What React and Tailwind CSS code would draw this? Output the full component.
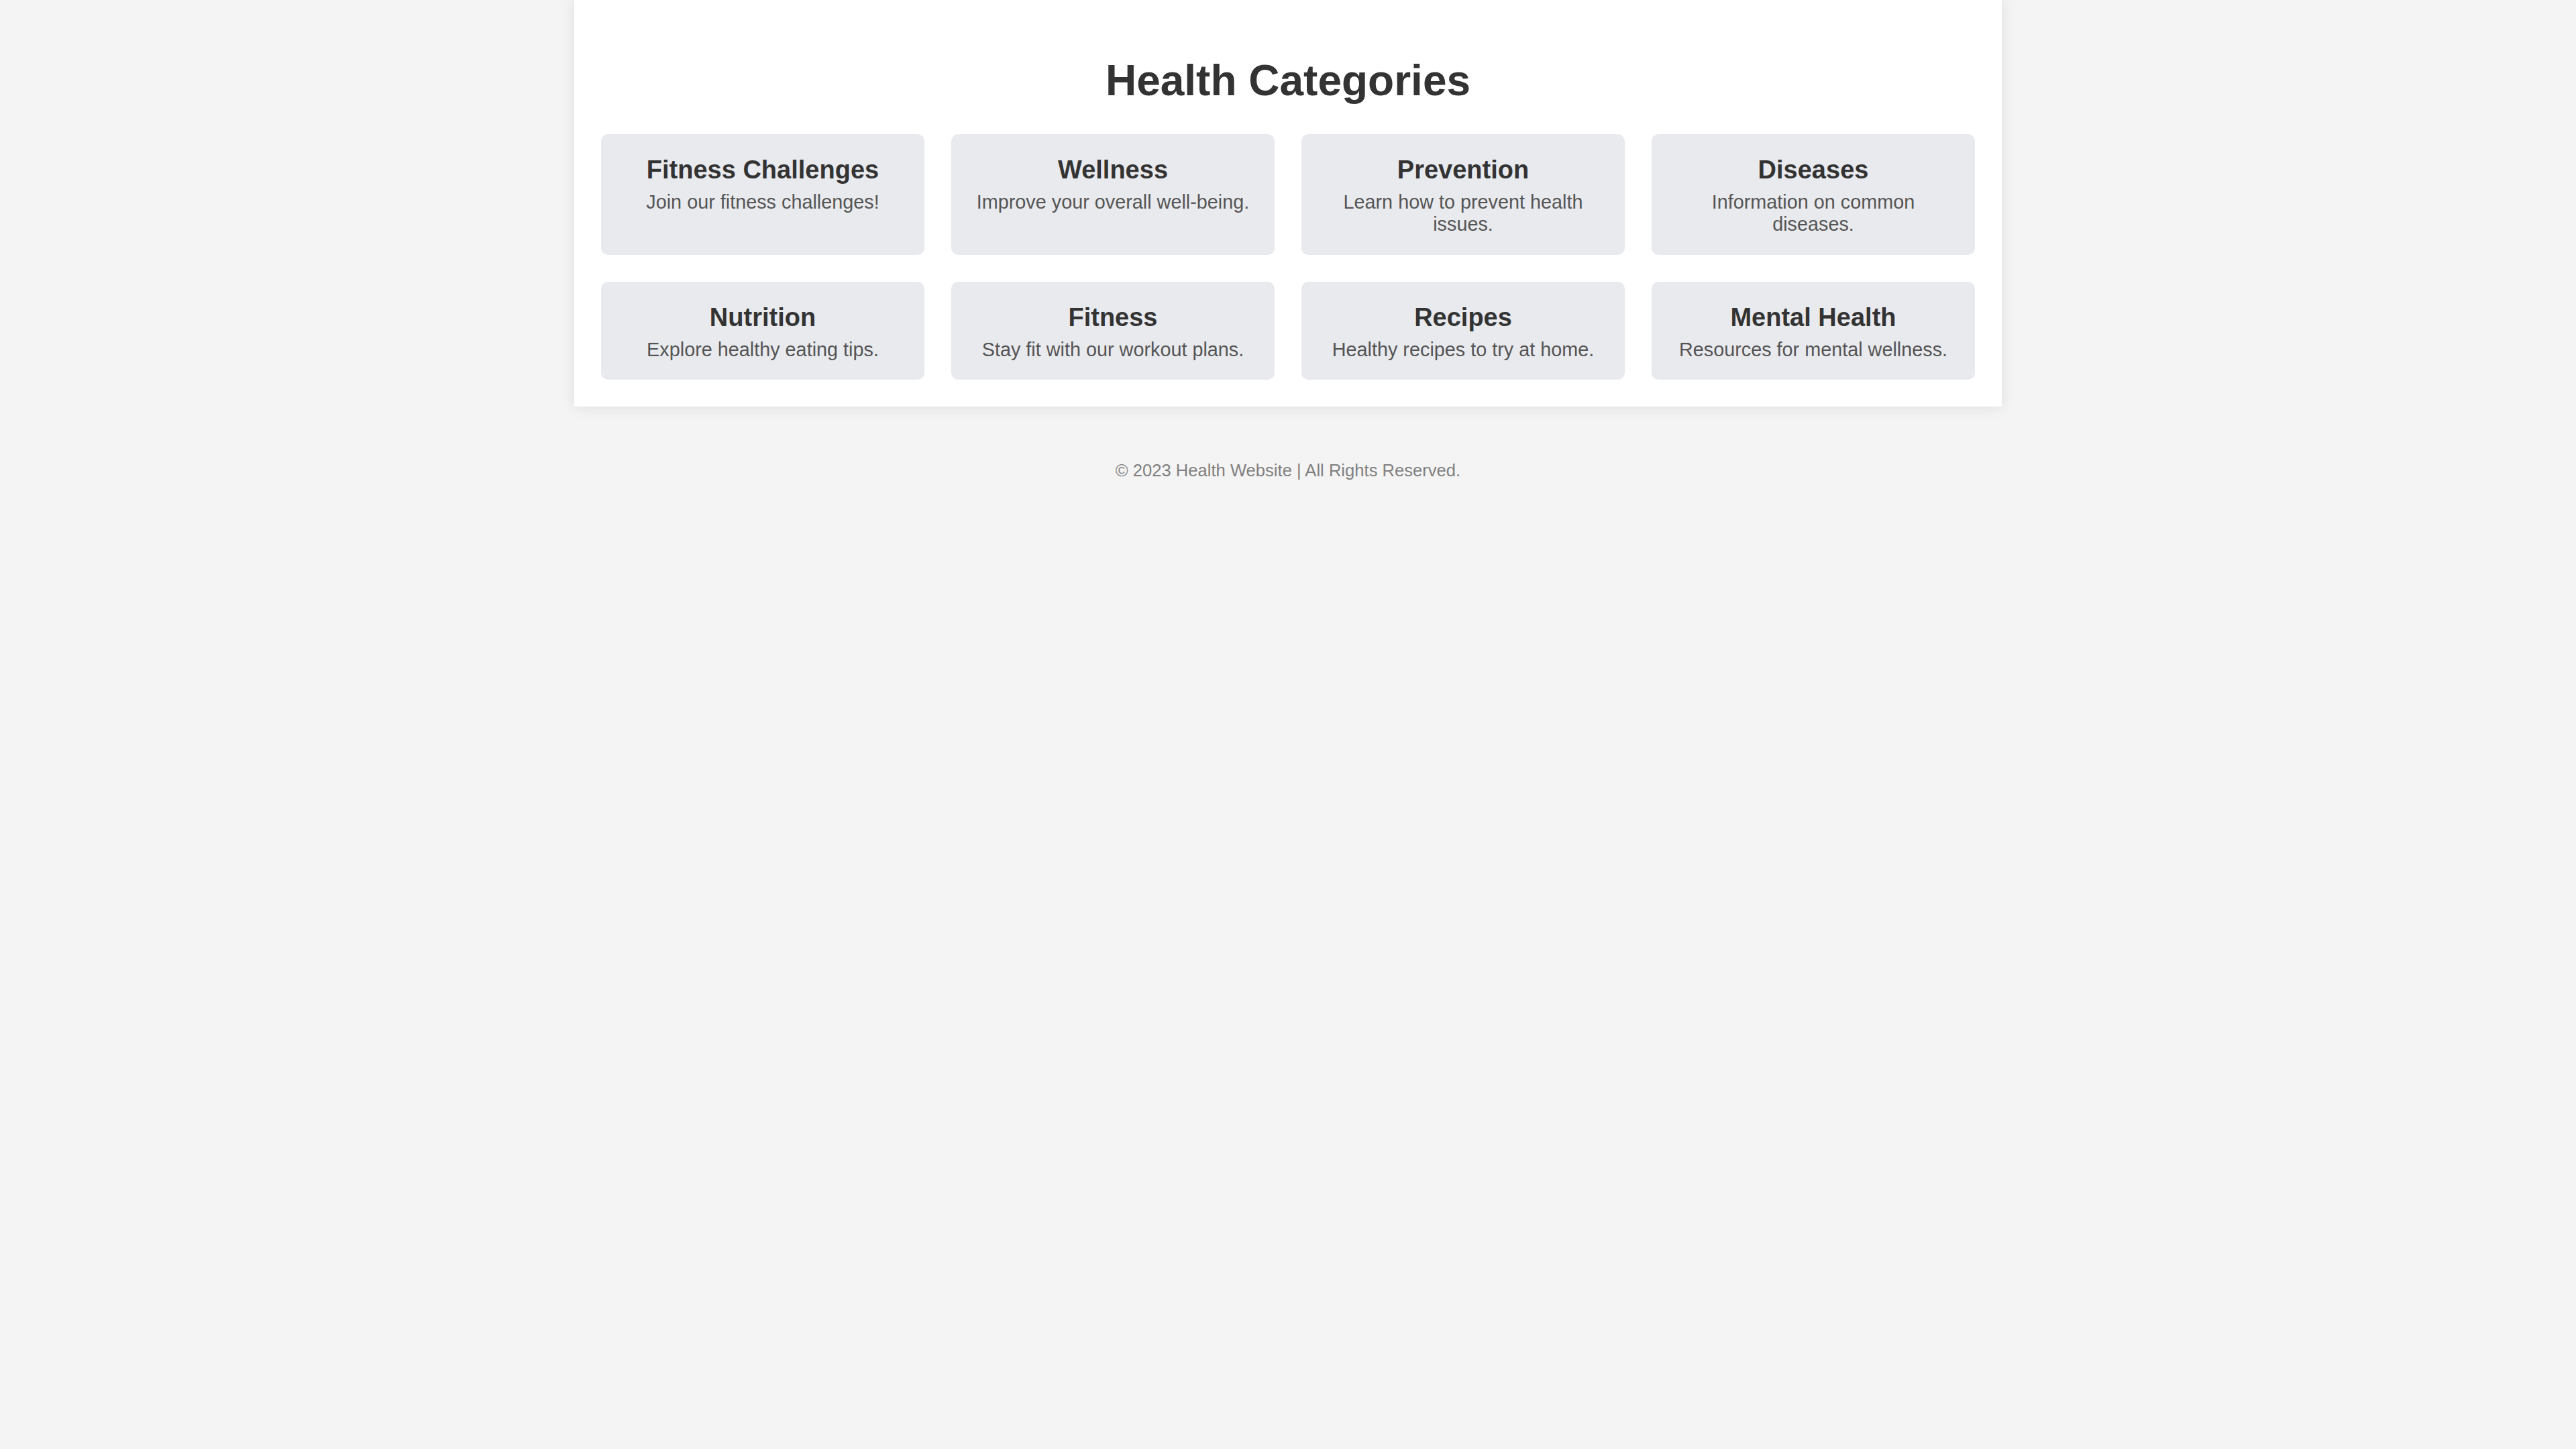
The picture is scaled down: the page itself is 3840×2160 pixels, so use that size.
const categories = [
  { title: "Fitness Challenges", desc: "Join our fitness challenges!" },
  { title: "Wellness", desc: "Improve your overall well-being." },
  { title: "Prevention", desc: "Learn how to prevent health issues." },
  { title: "Diseases", desc: "Information on common diseases." },
  { title: "Nutrition", desc: "Explore healthy eating tips." },
  { title: "Fitness", desc: "Stay fit with our workout plans." },
  { title: "Recipes", desc: "Healthy recipes to try at home." },
  { title: "Mental Health", desc: "Resources for mental wellness." },
];

export default function App() {
  return (
    <div className="min-h-screen bg-[#f4f4f4] font-['Liberation_Sans',Arial,sans-serif] text-[#333]">
      {/* Main panel */}
      <main className="mx-auto w-[2128px] bg-white px-[40px] pt-[84px] pb-[40px] shadow-[0_0_20px_rgba(0,0,0,0.1)]">
        <h2 className="text-center text-[64px] font-bold leading-[1.15] text-[#333] mb-[42px]">
          Health Categories
        </h2>
        <div className="grid grid-cols-4 gap-[40px]">
          {categories.map((c) => (
            <div key={c.title} className="rounded-[10px] bg-[#e9eaee] px-[30px] pt-[32px] pb-[28px] text-center">
              <h3 className="text-[38px] font-bold leading-[1.15] text-[#333]">{c.title}</h3>
              <p className="mt-[10px] text-[28.8px] leading-[1.15] text-[#555]">{c.desc}</p>
            </div>
          ))}
        </div>
      </main>

      <footer className="mt-[81px] text-center text-[25.6px] leading-[1.15] text-[#808080]">
        © 2023 Health Website | All Rights Reserved.
      </footer>
    </div>
  );
}
